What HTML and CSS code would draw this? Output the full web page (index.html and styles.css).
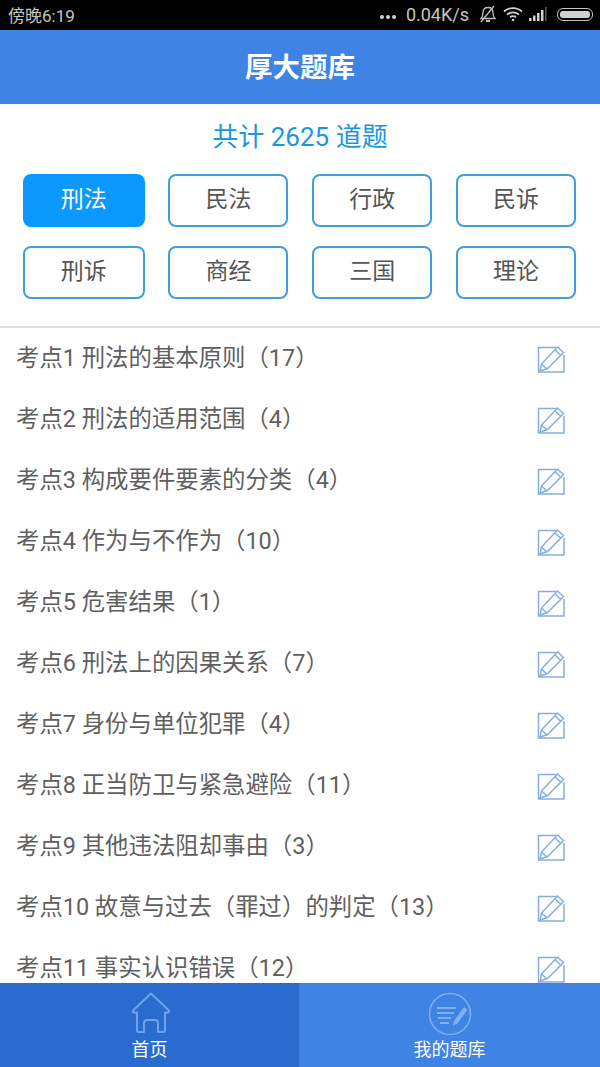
FILE: index.html
```html
<!DOCTYPE html>
<html lang="zh-CN">

<head>
  <meta charset="UTF-8">
  <meta name="viewport" content="width=device-width, initial-scale=1.0">
  <title>厚大题库</title>
  <link rel="stylesheet" href="styles.css">
</head>

<body>
  <div class="status-bar">
    <span class="status-time">傍晚6:19</span>
    <div class="status-right">
      <span class="status-dots"><i></i><i></i><i></i></span>
      <span class="status-speed">0.04K/s</span>
      <svg class="status-icon" width="18" height="20" viewBox="0 0 18 20" fill="none" stroke="#bdbdbd" stroke-width="1.3">
        <path d="M2 14.5c1.5-1.5 2-3 2-6 0-3 2-5 5-5s5 2 5 5c0 3 .5 4.5 2 6z" />
        <path d="M7 17h4" stroke-width="2" />
        <path d="M2 18L15 2" />
      </svg>
      <svg class="status-icon" width="20" height="16" viewBox="0 0 20 16" fill="none" stroke="#cfcfcf" stroke-width="1.7">
        <path d="M1 5.5c5-4.6 13-4.6 18 0" />
        <path d="M4 8.6c3.400-3 8.600-3 12 0" />
        <path d="M7 11.400c1.800-1.400 4.200-1.400 6 0" />
        <circle cx="10" cy="14" r="1.300" fill="#cfcfcf" stroke="none" />
      </svg>
      <svg class="status-icon" width="18" height="14" viewBox="0 0 18 14" fill="#cfcfcf">
        <rect x="0" y="11" width="2.500" height="3" />
        <rect x="4" y="8.500" width="2.500" height="5.500" />
        <rect x="8" y="6" width="2.500" height="8" />
        <rect x="12" y="3" width="2.500" height="11" />
        <rect x="16" y="0" width="1.500" height="14" fill="#5a5a5a" />
      </svg>
      <span class="battery"><i></i></span>
    </div>
  </div>

  <header class="app-header">厚大题库</header>

  <main class="content">
    <h2 class="total">共计 2625 道题</h2>

    <div class="subjects">
      <a class="subject active">刑法</a>
      <a class="subject">民法</a>
      <a class="subject">行政</a>
      <a class="subject">民诉</a>
      <a class="subject">刑诉</a>
      <a class="subject">商经</a>
      <a class="subject">三国</a>
      <a class="subject">理论</a>
    </div>

    <ul class="topics" id="topics"></ul>
  </main>

  <nav class="tabs">
    <a class="tab current">
      <svg width="40" height="42" viewBox="0 0 40 42" fill="none" stroke="#6ea4ef" stroke-width="2" stroke-linejoin="round">
        <path d="M20 1.500L38 18.500c.800 1.200-.400 2.500-2 2h-2V38c0 1-.800 2-2 2h-5V31c0-2-1.500-3-3-3h-8c-1.500 0-3 1-3 3v9H8c-1.200 0-2-1-2-2V20.500H4c-1.600.500-2.800-.800-2-2z" />
      </svg>
      <span>首页</span>
    </a>
    <a class="tab">
      <svg width="44" height="44" viewBox="0 0 44 44" fill="none" stroke="#7fb0f2" stroke-width="1.500">
        <circle cx="22" cy="22" r="20.500" />
        <path d="M9 16h19M9 21h17M10 26h13M12 31h9" stroke-width="2.200" />
        <path d="M26 29l10-14 3.500 2.500-10 14-4.500 2z" fill="#7fb0f2" stroke="none" />
      </svg>
      <span>我的题库</span>
    </a>
  </nav>

  <script>
    const topics = [
      ['考点1', '刑法的基本原则（17）'],
      ['考点2', '刑法的适用范围（4）'],
      ['考点3', '构成要件要素的分类（4）'],
      ['考点4', '作为与不作为（10）'],
      ['考点5', '危害结果（1）'],
      ['考点6', '刑法上的因果关系（7）'],
      ['考点7', '身份与单位犯罪（4）'],
      ['考点8', '正当防卫与紧急避险（11）'],
      ['考点9', '其他违法阻却事由（3）'],
      ['考点10', '故意与过去（罪过）的判定（13）'],
      ['考点11', '事实认识错误（12）'],
    ];

    const editIcon = `
      <svg class="edit-icon" width="30" height="30" viewBox="0 0 30 30" fill="none" stroke="#86aee0" stroke-width="1.500">
        <path d="M20 3.500H2.500V28H28V11" />
        <path d="M5.500 20L21.500 3l6 5.500-16 16-7.500 2.500z" fill="#fff" />
        <path d="M5.500 20l5.500 5M19 6l6 5.500" />
      </svg>`;

    const list = document.getElementById('topics');
    for (const [name, title] of topics) {
      const row = document.createElement('li');
      row.className = 'topic';
      row.innerHTML = `<span>${name} ${title}</span>${editIcon}`;
      list.appendChild(row);
    }
  </script>
</body>

</html>
```

FILE: styles.css
```css
* {
  box-sizing: border-box;
}

body {
  margin: 0;
  width: 600px;
  height: 1067px;
  display: flex;
  flex-direction: column;
  overflow: hidden;
  background-color: #fff;
  font-family: Roboto, 'Noto Sans CJK SC', sans-serif;
}

.status-bar {
  height: 30px;
  padding: 0 7px 2px 8px;
  display: flex;
  align-items: center;
  justify-content: space-between;
  background-color: #000;
  color: #c4c4c4;
  font-size: 17px;
}

.status-right {
  display: flex;
  align-items: center;
  gap: 6px;
}

.status-speed {
  font-size: 18px;
  margin-right: 4px;
}

.status-dots {
  display: flex;
  gap: 2px;
  margin: 6px 4px 0 0;
}

.status-dots i {
  width: 4px;
  height: 4px;
  border-radius: 50%;
  background-color: #cfcfcf;
}

.status-icon {
  display: block;
}

.battery {
  width: 36px;
  height: 13px;
  margin-left: 4px;
  padding: 2px;
  border: 1px solid #c4c4c4;
  border-radius: 6px;
}

.battery i {
  display: block;
  height: 100%;
  border-radius: 3px;
  background-color: #cfcfcf;
}

.app-header {
  height: 74px;
  padding-bottom: 4px;
  display: flex;
  align-items: center;
  justify-content: center;
  background-color: #3f83e4;
  color: #fff;
  font-size: 27.500px;
  font-weight: bold;
}

.content {
  flex: 1;
  min-height: 0;
  overflow: hidden;
}

.total {
  margin: 0;
  height: 70px;
  padding-bottom: 9px;
  display: flex;
  align-items: center;
  justify-content: center;
  color: #1a96e2;
  font-size: 26px;
  font-weight: normal;
}

.subjects {
  padding-left: 23px;
  display: grid;
  grid-template-columns: 121.600px repeat(3, 120px);
  grid-auto-rows: 53px;
  column-gap: 23.800px;
  row-gap: 19px;
}

.subject {
  padding-bottom: 7px;
  display: flex;
  align-items: center;
  justify-content: center;
  border: 2px solid #3fa0d8;
  border-radius: 8px;
  color: #555;
  font-size: 23px;
}

.subject.active {
  border-color: #0b98ff;
  background-color: #0b98ff;
  color: #fff;
}

.topics {
  list-style: none;
  margin: 27px 0 0;
  padding: 0;
  border-top: 2px solid #dcdcdc;
}

.topic {
  height: 61px;
  padding: 0 34px 6px 16px;
  display: flex;
  align-items: center;
  justify-content: space-between;
  color: #5f5f5f;
  font-size: 23.400px;
}

.edit-icon {
  display: block;
  margin-top: 6px;
}

.tabs {
  height: 84px;
  display: flex;
  background-color: #3f83e4;
}

.tab {
  flex: 1;
  padding-top: 9px;
  display: flex;
  flex-direction: column;
  align-items: center;
  color: #fff;
  font-size: 18px;
  line-height: 18px;
}

.tab span {
  margin-top: 5px;
}

.tab.current {
  flex: none;
  width: 299px;
  background-color: #2a6bd0;
}

.tab.current svg {
  margin-left: 2px;
}

.tab.current span {
  margin-top: 7px;
}
```
